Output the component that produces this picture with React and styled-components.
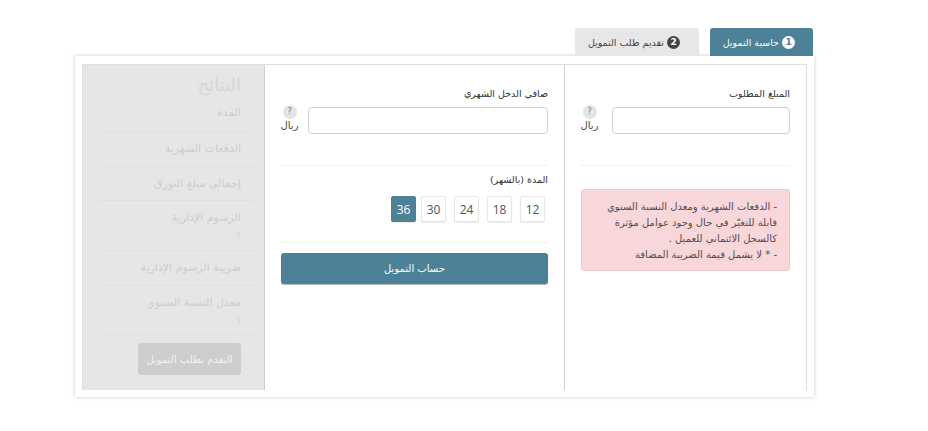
import React, {useState} from "react";
import styled, {createGlobalStyle} from "styled-components";

const Global = createGlobalStyle`
    html, body {
        margin: 0;
        padding: 0;
        background: white;
    }
    * {
        box-sizing: border-box;
    }
`

const Page = styled.div`
    direction: rtl;
    width: 928px;
    height: 431px;
    padding: 28px 114px 0 0;
    font-family: "DejaVu Sans", sans-serif;
    color: #333;
`

const Tabs = styled.div`
    display: flex;
    gap: 11px;
    height: 28px;
    padding-right: 1px;
`

const Tab = styled.div`
    display: flex;
    align-items: center;
    gap: 3px;
    height: 28px;
    width: ${p => p.$width}px;
    padding-right: ${p => p.$pad}px;
    border-radius: 3px 3px 0 0;
    font-size: 9.5px;
    background: ${p => p.$active ? '#4d8198' : '#e7e7e7'};
    color: ${p => p.$active ? 'white' : '#444'};
`

const TabNum = styled.span`
    display: flex;
    align-items: center;
    justify-content: center;
    width: 13px;
    height: 13px;
    border-radius: 50%;
    font-size: 9px;
    font-weight: bold;
    background: ${p => p.$active ? 'white' : '#444'};
    color: ${p => p.$active ? '#4d8198' : 'white'};
`

const Card = styled.div`
    width: 739px;
    height: 341px;
    padding: 8px 7px 7px 7px;
    background: white;
    box-shadow: 0 0 4px rgba(0,0,0,.22);
`

const Inner = styled.div`
    display: flex;
    height: 100%;
    border: 1px solid #dedede;
    border-bottom: none;
`

const Column = styled.div`
    width: ${p => p.$width}px;
    flex-shrink: 0;
    padding: 0 16px;
    border-left: 1px solid #cfcfcf;
`

const Label = styled.div`
    height: 13px;
    margin-top: 22px;
    font-size: 9.5px;
    line-height: 13px;
`

const InputRow = styled.div`
    display: flex;
    align-items: flex-start;
    justify-content: space-between;
    margin-top: 7px;
`

const Input = styled.input`
    height: 27px;
    width: ${p => p.$width}px;
    border: 1px solid #cfcfcf;
    border-radius: 4px;
    outline: none;
    background: white;
`

const Unit = styled.div`
    display: flex;
    flex-direction: column;
    align-items: center;
    width: 17px;
    margin-top: -2px;
    font-size: 10px;
    line-height: 14px;
    color: #444;
`

const Hint = styled.span`
    display: flex;
    align-items: center;
    justify-content: center;
    width: 14px;
    height: 14px;
    border-radius: 50%;
    background: #e4e4e4;
    color: #777;
    font-size: 8px;
`

const Rule = styled.div`
    height: 1px;
    margin-top: ${p => p.$top}px;
    background: #f0f0f0;
`

const Alert = styled.div`
    height: 82px;
    margin-top: 23px;
    padding: 9px 12px 0 0;
    background: #f8d7da;
    border: 1px solid #f0c6cb;
    border-radius: 3px;
    font-size: 10px;
    line-height: 16px;
    color: #5a4a4c;
`

const SmallLabel = styled.div`
    height: 13px;
    margin-top: 7px;
    font-size: 9.5px;
    line-height: 13px;
`

const Months = styled.div`
    display: flex;
    gap: 8px;
    margin-top: 10px;
    padding-right: 3px;
`

const Month = styled.button`
    width: 25px;
    height: 26px;
    padding: 0;
    border: 1px solid ${p => p.$active ? '#4d8198' : '#e6e6e6'};
    border-radius: 2px;
    background: ${p => p.$active ? '#4d8198' : 'white'};
    color: ${p => p.$active ? 'white' : '#555'};
    font-family: "Open Sans", sans-serif;
    font-size: 12px;
    cursor: pointer;
    box-shadow: 0 1px 1px rgba(0,0,0,.08);
    &:last-child {
        margin-right: -3px;
    }
`

const Submit = styled.button`
    display: block;
    width: 100%;
    height: 31px;
    margin-top: 10px;
    border: none;
    border-radius: 3px;
    background: #4d8198;
    color: white;
    font-family: "DejaVu Sans", sans-serif;
    font-size: 10px;
    box-shadow: 0 1px 1px rgba(0,0,0,.3);
    cursor: pointer;
`

const Results = styled.div`
    flex: 1;
    background: #e6e6e6;
    padding: 7px 9px 0 15px;
    color: #cdcdcd;
`

const ResultsTitle = styled.div`
    height: 24px;
    padding-right: 14px;
    font-size: 18px;
    line-height: 26px;
    color: #d6d6d6;
`

const ResultRow = styled.div`
    height: ${p => p.$height}px;
    padding: 9px 14px 0 0;
    border-bottom: 1px solid #e0e0e0;
    font-size: 11px;
    line-height: 16px;
`

const ResultValue = styled.div`
    margin-top: 3px;
    font-size: 9px;
    line-height: 14px;
`

const Apply = styled.button`
    display: block;
    width: 103px;
    height: 32px;
    margin: 8px 14px 0 0;
    padding: 0;
    border: none;
    border-radius: 3px;
    background: #cdcdcd;
    color: #f2f2f2;
    font-family: "DejaVu Sans", sans-serif;
    font-size: 10px;
    white-space: nowrap;
`

const months = [12, 18, 24, 30, 36];

const rows = [
    {text: 'المدة', height: 36},
    {text: 'الدفعات الشهرية', height: 35},
    {text: 'إجمالي مبلغ التورق', height: 34},
    {text: 'الرسوم الإدارية', height: 50, value: '؟'},
    {text: 'ضريبة الرسوم الإدارية', height: 35},
    {text: 'معدل النسبة السنوي', height: 49, value: '؟'},
];

const Amount = ({label, width}) => <>
    <Label>{label}</Label>
    <InputRow>
        <Input $width={width}/>
        <Unit>
            <Hint>?</Hint>
            ريال
        </Unit>
    </InputRow>
</>

const App = () => {
    const [month, setMonth] = useState(36);
    return <Page>
        <Global/>
        <Tabs>
            <Tab $active $width={103} $pad={18}><TabNum $active>1</TabNum>حاسبة التمويل</Tab>
            <Tab $width={124} $pad={19}><TabNum>2</TabNum>تقديم طلب التمويل</Tab>
        </Tabs>
        <Card>
            <Inner>
                <Column $width={242}>
                    <Amount label="المبلغ المطلوب" width={178}/>
                    <Rule $top={31}/>
                    <Alert>
                        - الدفعات الشهرية ومعدل النسبة السنوي<br/>
                        قابلة للتغيّر في حال وجود عوامل مؤثرة<br/>
                        كالسجل الائتماني للعميل .<br/>
                        - * لا يشمل قيمة الضريبة المضافة
                    </Alert>
                </Column>
                <Column $width={300}>
                    <Amount label="صافي الدخل الشهري" width={240}/>
                    <Rule $top={31}/>
                    <SmallLabel>المدة (بالشهر)</SmallLabel>
                    <Months>
                        {months.map(m => <Month key={m} $active={m === month} onClick={() => setMonth(m)}>{m}</Month>)}
                    </Months>
                    <Rule $top={20}/>
                    <Submit>حساب التمويل</Submit>
                </Column>
                <Results>
                    <ResultsTitle>النتائج</ResultsTitle>
                    {rows.map(r => <ResultRow key={r.text} $height={r.height}>
                        {r.text}
                        {r.value && <ResultValue>{r.value}</ResultValue>}
                    </ResultRow>)}
                    <Apply>التقدم بطلب التمويل</Apply>
                </Results>
            </Inner>
        </Card>
    </Page>
}

export default App;
